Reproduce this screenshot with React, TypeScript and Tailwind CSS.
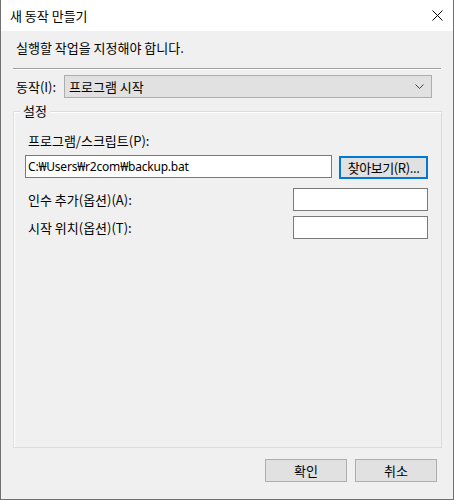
import React from 'react';

const font = "font-['Noto_Sans_CJK_KR','Noto_Sans',sans-serif]";

const TextBox: React.FC<{ className?: string; value?: string }> = ({ className = '', value = '' }) => (
    <div className={`h-[23px] bg-white border border-[#7a7a7a] flex items-center px-[2px] text-[12px] tracking-[-0.2px] text-black font-['Noto_Sans','Noto_Sans_CJK_KR',sans-serif] ${className}`}>
        {value}
    </div>
);

const Button: React.FC<{ label: string; focused?: boolean; className?: string }> = ({ label, focused, className = '' }) => (
    <div
        className={`h-[23px] flex items-center justify-center bg-[#e1e1e1] text-[13px] leading-none text-black ${
            focused ? 'border-2 border-[#0078d7]' : 'border border-[#adadad]'
        } ${className}`}
    >
        {label}
    </div>
);

export default function App() {
    return (
        <div className={`w-[454px] h-[500px] flex flex-col border-x border-b border-[#707070] bg-[#f0f0f0] text-[13px] text-black ${font}`}>
            {/* title bar */}
            <div className="h-[31px] bg-white flex items-center justify-between pl-[9px] pr-[10px] shrink-0">
                <span className="text-[13px] leading-none">새 동작 만들기</span>
                <svg width="11" height="11" viewBox="0 0 11 11">
                    <path d="M0.5 0.5 L10.5 10.5 M10.5 0.5 L0.5 10.5" stroke="#000" strokeWidth="1" />
                </svg>
            </div>

            <div className="flex-1 flex flex-col px-[12px]">
                <div className="mt-[9px] h-[16px] leading-[16px] pl-[3px]">실행할 작업을 지정해야 합니다.</div>

                <div className="mt-[12px] w-[428px] border-t border-[#a0a0a0] border-b border-b-white"></div>

                <div className="mt-[5px] flex items-center">
                    <span className="w-[51px] pl-[3px]">동작(I):</span>
                    <div className="w-[368px] h-[23px] bg-[#e1e1e1] border border-[#adadad] flex items-center justify-between pl-[4px] pr-[7px]">
                        <span>프로그램 시작</span>
                        <svg width="9" height="5" viewBox="0 0 9 5">
                            <path d="M0.5 0.5 L4.5 4.5 L8.5 0.5" stroke="#404040" strokeWidth="1" fill="none" />
                        </svg>
                    </div>
                </div>

                {/* 설정 group */}
                <div className="relative mt-[13px] w-[429px] h-[337px] border border-[#dcdcdc] shadow-[inset_1px_1px_0_#ffffff]">
                    <span className="absolute left-[6px] top-[-9px] px-[3px] bg-[#f0f0f0] leading-[16px]">설정</span>

                    <div className="flex flex-col pl-[11px] pr-[13px]">
                        <div className="mt-[21px] h-[16px] leading-[16px] pl-[3px]">프로그램/스크립트(P):</div>
                        <div className="mt-[6px] flex items-start">
                            <TextBox className="w-[307px]" value="C:₩Users₩r2com₩backup.bat" />
                            <Button label="찾아보기(R)..." focused className="ml-[7px] mt-[1px] w-[89px] tracking-[-0.4px]" />
                        </div>
                        <div className="mt-[9px] flex items-center justify-between">
                            <span className="pl-[3px]">인수 추가(옵션)(A):</span>
                            <TextBox className="w-[135px]" />
                        </div>
                        <div className="mt-[5px] flex items-center justify-between">
                            <span className="pl-[3px]">시작 위치(옵션)(T):</span>
                            <TextBox className="w-[135px]" />
                        </div>
                    </div>
                </div>

                <div className="mt-[11px] flex justify-end gap-[8px] pr-[4px]">
                    <Button label="확인" className="w-[82px]" />
                    <Button label="취소" className="w-[82px]" />
                </div>
            </div>
        </div>
    );
}
